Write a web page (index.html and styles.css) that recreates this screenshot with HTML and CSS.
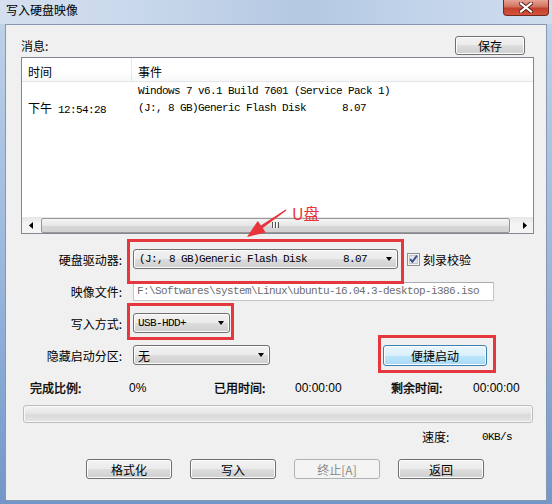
FILE: index.html
```html
<!DOCTYPE html>
<html lang="zh-CN">
<head>
  <meta charset="UTF-8" />
  <meta name="viewport" content="width=device-width, initial-scale=1.0" />
  <title>写入硬盘映像</title>
  <link rel="stylesheet" href="styles.css">
</head>
<body>
  <div class="window">
    <div class="titlebar">
      <span class="title">写入硬盘映像</span>
      <span class="close-btn">
        <svg width="14" height="11" viewBox="0 0 14 11">
          <path d="M2 1.5L12 9.5M12 1.5L2 9.5" stroke="#5a1c16" stroke-width="4" stroke-linecap="square"/>
          <path d="M2 1.5L12 9.5M12 1.5L2 9.5" stroke="#fff" stroke-width="2.2" stroke-linecap="square"/>
        </svg>
      </span>
    </div>

    <div class="client">
      <div class="msg-head">
        <span>消息:</span>
        <button class="btn save-btn">保存</button>
      </div>

      <div class="listview">
        <div class="lv-header">
          <div class="col-time">时间</div>
          <div class="col-event">事件</div>
        </div>
        <div class="lv-body">
          <div class="lv-row">
            <div class="col-time"></div>
            <div class="col-event mono">Windows 7 v6.1 Build 7601 (Service Pack 1)</div>
          </div>
          <div class="lv-row">
            <div class="col-time mono"><span class="cjk">下午</span> 12:54:28</div>
            <div class="col-event mono">(J:, 8 GB)Generic Flash Disk      8.07</div>
          </div>
        </div>
        <div class="hscroll">
          <span class="sb-arrow"><svg width="4" height="7"><path d="M4 0V7L0 3.5Z" fill="#000"/></svg></span>
          <span class="sb-thumb"><span class="grip"></span></span>
          <span class="sb-arrow"><svg width="4" height="7"><path d="M0 0V7L4 3.5Z" fill="#000"/></svg></span>
        </div>
      </div>

      <div class="form">
        <div class="form-row">
          <label class="form-label">硬盘驱动器:</label>
          <div class="combo combo-drive">
            <span class="mono">(J:, 8 GB)Generic Flash Disk      8.07</span>
            <span class="combo-arrow"></span>
          </div>
          <span class="check">
            <svg width="13" height="13" viewBox="0 0 13 13">
              <rect x="0.5" y="0.5" width="12" height="12" fill="#f6f6f6" stroke="#8e8f8f"/>
              <rect x="2.5" y="2.5" width="8" height="8" fill="#e1e5ec" stroke="#c0c4cc"/>
              <path d="M3.2 6.2L5.4 8.8L10 2.6" fill="none" stroke="#3b4f86" stroke-width="1.9"/>
            </svg>
            刻录校验
          </span>
        </div>
        <div class="form-row">
          <label class="form-label">映像文件:</label>
          <div class="textbox mono">F:\Softwares\system\Linux\ubuntu-16.04.3-desktop-i386.iso</div>
        </div>
        <div class="form-row">
          <label class="form-label">写入方式:</label>
          <div class="combo combo-mode">
            <span class="mono">USB-HDD+</span>
            <span class="combo-arrow"></span>
          </div>
        </div>
        <div class="form-row">
          <label class="form-label">隐藏启动分区:</label>
          <div class="combo combo-hide">
            <span>无</span>
            <span class="combo-arrow"></span>
          </div>
          <button class="btn btn-hot quick-btn">便捷启动</button>
        </div>
      </div>

      <div class="status-row">
        <span class="st-label">完成比例:</span>
        <span class="st-value">0%</span>
        <span class="st-label">已用时间:</span>
        <span class="st-value">00:00:00</span>
        <span class="st-label">剩余时间:</span>
        <span class="st-value">00:00:00</span>
      </div>

      <div class="progress"></div>

      <div class="speed-row">
        <span>速度:</span>
        <span class="mono">0KB/s</span>
      </div>

      <div class="actions">
        <button class="btn">格式化</button>
        <button class="btn">写入</button>
        <button class="btn" disabled>终止[A]</button>
        <button class="btn">返回</button>
      </div>
    </div>
  </div>

  <!-- annotations drawn over the screenshot -->
  <div class="mark mark-drive"></div>
  <div class="mark mark-mode"></div>
  <div class="mark mark-quick"></div>
  <svg class="arrow" width="60" height="45" viewBox="0 0 60 45">
    <polygon points="7,37 25.8,32.5 22.7,27.9 46.4,10.6 45.6,9.4 20.9,25.5 17.8,20.9" fill="#e8353c"/>
  </svg>
  <span class="note">U盘</span>
</body>
</html>
```

FILE: styles.css
```css
* {
  box-sizing: border-box;
}

body {
  margin: 0;
  width: 552px;
  height: 504px;
  overflow: hidden;
  position: relative;
  font-family: "Noto Sans CJK SC", "Liberation Sans", sans-serif;
  font-size: 12px;
  color: #000;
}

.mono {
  font-family: "Liberation Mono", "Noto Sans CJK SC", monospace;
  font-size: 11px;
  letter-spacing: -0.6px;
  white-space: pre;
}

.cjk {
  font-family: "Noto Sans CJK SC", sans-serif;
  font-size: 12px;
  letter-spacing: 0;
}

.window {
  height: 504px;
  padding: 0 5px 3px 5px;
  display: flex;
  flex-direction: column;
  background: linear-gradient(to bottom, #c9d9ec 0, #bcd0e8 30px, #98b6dc 55%, #7396c9 100%);
}

/* title bar */
.titlebar {
  height: 24px;
  margin: 0 -5px;
  padding-left: 6px;
  display: flex;
  justify-content: space-between;
  align-items: flex-start;
  background: linear-gradient(to right, #d4e0ef 0, #c6d6ea 30%, #b4c8e3 55%, #c1d3ea 75%, #cfdcee 100%);
}

.title {
  line-height: 20px;
  font-size: 12px;
}

.close-btn {
  width: 46px;
  height: 16px;
  margin-right: 3px;
  display: flex;
  align-items: center;
  justify-content: center;
  border: 1px solid #6e2a22;
  border-top: none;
  border-radius: 0 0 4px 4px;
  background: linear-gradient(to bottom, #e6a394 0, #d2725f 45%, #c2402e 55%, #d5533a 100%);
}

/* client area */
.client {
  flex: 1;
  background: #f0f0f0;
  border: 1px solid #8797b0;
  padding-left: 15px;
}

.msg-head {
  margin-top: 11px;
  height: 19px;
  width: 513px;
  display: flex;
  justify-content: space-between;
  align-items: center;
}

.btn {
  height: 20px;
  padding: 0;
  border: 1px solid #707070;
  border-radius: 3px;
  font-family: "Noto Sans CJK SC", sans-serif;
  font-size: 12px;
  color: #000;
  background: linear-gradient(to bottom, #f2f2f2 0, #ebebeb 50%, #dddddd 50%, #cfcfcf 100%);
  box-shadow: inset 0 0 0 1px #fcfcfc;
}

.btn:disabled {
  border-color: #adb2b5;
  background: #f4f4f4;
  color: #8a8a8a;
  box-shadow: none;
}

.btn-hot {
  border-color: #3c7fb1;
  background: linear-gradient(to bottom, #eaf6fd 0, #d9f0fc 50%, #bee6fd 50%, #a7d9f5 100%);
}

.save-btn {
  width: 70px;
  height: 19px;
  margin-right: 9px;
}

/* list view */
.listview {
  margin-top: 2px;
  width: 513px;
  height: 177px;
  border: 1px solid #828790;
  background: #fff;
  display: flex;
  flex-direction: column;
}

.lv-header {
  height: 24px;
  display: flex;
  border-bottom: 1px solid #e5e5e5;
  background: linear-gradient(to bottom, #fff 0, #fff 55%, #f7f8f9 100%);
}

.lv-header > div {
  padding-top: 5px;
}

.col-time {
  width: 110px;
  padding-left: 6px;
}

.lv-header .col-time {
  border-right: 1px solid #e3e8ee;
}

.col-event {
  padding-left: 6px;
}

.lv-body {
  flex: 1;
}

.lv-row {
  display: flex;
  height: 17px;
  align-items: center;
}

.lv-row .col-event {
  padding-left: 6px;
}

.hscroll {
  height: 16px;
  display: flex;
  align-items: center;
  background: linear-gradient(to bottom, #e6e6e6 0, #f4f4f4 40%, #f4f4f4 100%);
}

.sb-arrow {
  width: 17px;
  height: 16px;
  display: flex;
  align-items: center;
  justify-content: center;
}

.sb-thumb {
  flex: 1;
  height: 15px;
  margin: 0 6px 0 2px;
  border: 1px solid #979797;
  border-radius: 2px;
  background: linear-gradient(to bottom, #f4f4f4 0, #e6e6e6 50%, #d6d6d6 51%, #d2d2d2 100%);
  display: flex;
  align-items: center;
  justify-content: center;
}

.grip {
  width: 7px;
  height: 6px;
  background: repeating-linear-gradient(to right, #555 0, #555 1px, #fafafa 1px, #fafafa 2px, transparent 2px, transparent 3px);
}

/* form */
.form {
  margin-top: 15px;
  display: flex;
  flex-direction: column;
  gap: 12px;
}

.form-row {
  height: 20px;
  display: flex;
  align-items: center;
}

.form-label {
  width: 105px;
  padding-right: 4px;
  margin-right: 7px;
  text-align: right;
}

.combo {
  height: 20px;
  padding: 0 5px 0 5px;
  display: flex;
  align-items: center;
  justify-content: space-between;
  border: 1px solid #707070;
  border-radius: 3px;
  background: linear-gradient(to bottom, #f2f2f2 0, #ebebeb 50%, #dddddd 50%, #cfcfcf 100%);
  box-shadow: inset 0 0 0 1px #fcfcfc;
}

.combo-arrow {
  width: 0;
  height: 0;
  border-left: 3.5px solid transparent;
  border-right: 3.5px solid transparent;
  border-top: 4px solid #000;
}

.combo-drive {
  width: 265px;
}

.combo-mode {
  width: 97px;
  padding-left: 4px;
}

.combo-hide {
  width: 137px;
  padding-left: 4px;
}

.quick-btn {
  width: 104px;
  height: 21px;
  margin-left: 113px;
  margin-top: 1px;
}

.check {
  margin-left: 9px;
  display: flex;
  align-items: center;
  gap: 3px;
}

.textbox {
  width: 361px;
  height: 19px;
  padding-left: 3px;
  line-height: 17px;
  color: #6d6d6d;
  background: #fff;
  border: 1px solid #c5c5c5;
  border-top-color: #abadb3;
}

/* status */
.status-row {
  margin-top: 14px;
  padding-left: 9px;
  height: 16px;
  display: grid;
  grid-template-columns: 99px 85px 81px 96px 82px auto;
  align-items: center;
}

.st-label {
  -webkit-text-stroke: 0.35px #000;
}

.st-value {
  font-family: "Liberation Sans", sans-serif;
  font-size: 12px;
}

.status-row .st-value:first-of-type {
  font-size: 10px;
}

.progress {
  margin-top: 10px;
  margin-left: 2px;
  width: 510px;
  height: 18px;
  border: 1px solid #bcbcbc;
  border-radius: 3px;
  background: linear-gradient(to bottom, #f3f3f3 0, #e6e6e6 45%, #dadada 55%, #e4e4e4 100%);
  box-shadow: inset 0 0 0 1px #f8f8f8;
}

.speed-row {
  margin-top: 5px;
  padding-left: 401px;
  height: 16px;
  display: grid;
  grid-template-columns: 60px auto;
  align-items: center;
}

.actions {
  margin-top: 15px;
  padding-left: 65px;
  display: flex;
  gap: 18px;
}

.actions .btn {
  width: 86px;
}

/* red annotations */
.mark {
  position: absolute;
  border: 3px solid #e5383e;
}

.mark-drive {
  left: 127px;
  top: 239px;
  width: 277px;
  height: 45px;
}

.mark-mode {
  left: 127px;
  top: 303px;
  width: 107px;
  height: 37px;
}

.mark-quick {
  left: 378px;
  top: 335px;
  width: 118px;
  height: 38px;
}

.arrow {
  position: absolute;
  left: 240px;
  top: 200px;
}

.note {
  position: absolute;
  left: 292px;
  top: 202px;
  font-size: 16px;
  line-height: 22px;
  color: #e8353c;
}
```
